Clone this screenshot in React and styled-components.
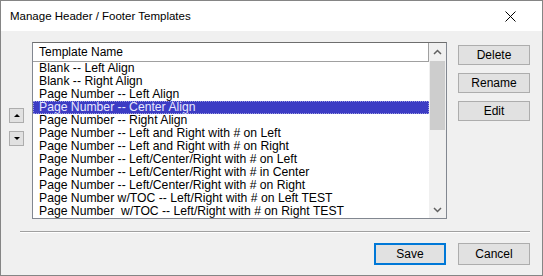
import React from 'react';
import styled, { createGlobalStyle } from 'styled-components';

const templates = [
  'Blank -- Left Align',
  'Blank -- Right Align',
  'Page Number -- Left Align',
  'Page Number -- Center Align',
  'Page Number -- Right Align',
  'Page Number -- Left and Right with # on Left',
  'Page Number -- Left and Right with # on Right',
  'Page Number -- Left/Center/Right with # on Left',
  'Page Number -- Left/Center/Right with # in Center',
  'Page Number -- Left/Center/Right with # on Right',
  'Page Number w/TOC -- Left/Right with # on Left TEST',
  'Page Number  w/TOC -- Left/Right with # on Right TEST',
];

const App = () => {
  const selected = 3;

  return (
    <>
      <Global />
      <Window>
        <TitleBar>
          <span>Manage Header / Footer Templates</span>
          <CloseBtn>
            <svg width="11" height="11" viewBox="0 0 11 11">
              <path d="M0.5 0.5 L10.5 10.5 M10.5 0.5 L0.5 10.5" stroke="#000" strokeWidth="1" />
            </svg>
          </CloseBtn>
        </TitleBar>
        <Body>
          <MainRow>
            <MoveCol>
              <ArrowBtn><Tri $up /></ArrowBtn>
              <ArrowBtn><Tri /></ArrowBtn>
            </MoveCol>
            <ListBox>
              <ListInner>
                <Header>Template Name</Header>
                {templates.map((t, i) => (
                  <Row key={i} $selected={i === selected}>{t}</Row>
                ))}
              </ListInner>
              <ScrollBar>
                <ScrollArrow>
                  <svg width="9" height="6" viewBox="0 0 9 6">
                    <path d="M1 5 L4.5 1.5 L8 5" stroke="#606060" strokeWidth="1.5" fill="none" />
                  </svg>
                </ScrollArrow>
                <Track>
                  <Thumb />
                </Track>
                <ScrollArrow>
                  <svg width="9" height="6" viewBox="0 0 9 6">
                    <path d="M1 1 L4.5 4.5 L8 1" stroke="#606060" strokeWidth="1.5" fill="none" />
                  </svg>
                </ScrollArrow>
              </ScrollBar>
            </ListBox>
            <SideCol>
              <Button>Delete</Button>
              <Button>Rename</Button>
              <Button>Edit</Button>
            </SideCol>
          </MainRow>
          <Separator />
          <Footer>
            <Button $default>Save</Button>
            <Button>Cancel</Button>
          </Footer>
        </Body>
      </Window>
    </>
  );
};

export default App;

const Global = createGlobalStyle`
  body {
    margin: 0;
    background: #ffffff;
  }
`;

const Window = styled.div`
  width: 543px;
  height: 276px;
  box-sizing: border-box;
  border: 1px solid #858585;
  display: flex;
  flex-direction: column;
  font-family: "Liberation Sans", Arial, sans-serif;
  font-size: 12px;
  color: #000;
`;

const TitleBar = styled.div`
  height: 30px;
  background: #ffffff;
  display: flex;
  align-items: center;
  justify-content: space-between;
  padding: 0 0 0 9px;
  span {
    font-size: 11.5px;
  }
`;

const CloseBtn = styled.div`
  width: 46px;
  height: 30px;
  display: flex;
  align-items: center;
  justify-content: center;
  margin-right: 9px;
`;

const Body = styled.div`
  flex: 1;
  background: #f0f0f0;
  display: flex;
  flex-direction: column;
  padding-top: 11px;
`;

const MainRow = styled.div`
  display: flex;
  align-items: flex-start;
`;

const MoveCol = styled.div`
  width: 15px;
  margin-left: 8px;
  margin-top: 66px;
  display: flex;
  flex-direction: column;
  gap: 8px;
`;

const ArrowBtn = styled.div`
  width: 15px;
  height: 15px;
  box-sizing: border-box;
  background: #e1e1e1;
  border: 1px solid #adadad;
  display: flex;
  align-items: center;
  justify-content: center;
`;

const Tri = styled.div`
  width: 0;
  height: 0;
  border-left: 3px solid transparent;
  border-right: 3px solid transparent;
  ${p => (p.$up ? 'border-bottom: 3px solid #000;' : 'border-top: 3px solid #000;')}
`;

const ListBox = styled.div`
  margin-left: 8px;
  width: 415px;
  height: 177px;
  box-sizing: border-box;
  border: 1px solid #828790;
  border-top-color: #6e6e6e;
  background: #ffffff;
  display: flex;
  overflow: hidden;
`;

const ListInner = styled.div`
  flex: 1;
  overflow: hidden;
  font-size: 12.2px;
`;

const Header = styled.div`
  height: 18px;
  box-sizing: content-box;
  border-bottom: 1px solid #a0a0a0;
  border-right: 1px solid #a0a0a0;
  padding-left: 6px;
  display: flex;
  align-items: center;
  font-size: 12px;
`;

const Row = styled.div`
  height: 13px;
  line-height: 13px;
  padding-left: 6px;
  white-space: pre;
  box-sizing: border-box;
  background: ${p => (p.$selected ? '#3c3cc4' : 'transparent')};
  color: ${p => (p.$selected ? '#e8e8ff' : '#000')};
  outline: ${p => (p.$selected ? '1px dotted #9a9ae0' : 'none')};
  outline-offset: -1px;
`;

const ScrollBar = styled.div`
  width: 17px;
  background: #f0f0f0;
  display: flex;
  flex-direction: column;
`;

const ScrollArrow = styled.div`
  height: 17px;
  display: flex;
  align-items: center;
  justify-content: center;
`;

const Track = styled.div`
  flex: 1;
`;

const Thumb = styled.div`
  margin: 1px 1px 0 1px;
  height: 69px;
  background: #cdcdcd;
`;

const SideCol = styled.div`
  margin-left: 11px;
  margin-top: 3px;
  display: flex;
  flex-direction: column;
  gap: 8px;
`;

const Button = styled.div`
  width: 72px;
  height: ${p => (p.$default ? '22px' : '20px')};
  box-sizing: border-box;
  background: #e1e1e1;
  border: 1px solid ${p => (p.$default ? '#0078d7' : '#adadad')};
  box-shadow: ${p => (p.$default ? 'inset 0 0 0 1px #0078d7' : 'none')};
  display: flex;
  align-items: center;
  justify-content: center;
  font-size: 12px;
`;

const Separator = styled.div`
  margin: 12px 0 0 19px;
  width: 510px;
  height: 1px;
  background: #a0a0a0;
  border-bottom: 1px solid #ffffff;
`;

const Footer = styled.div`
  display: flex;
  justify-content: flex-end;
  gap: 12px;
  margin-top: 10px;
  padding-right: 12px;
  ${Button} {
    height: 22px;
  }
`;
